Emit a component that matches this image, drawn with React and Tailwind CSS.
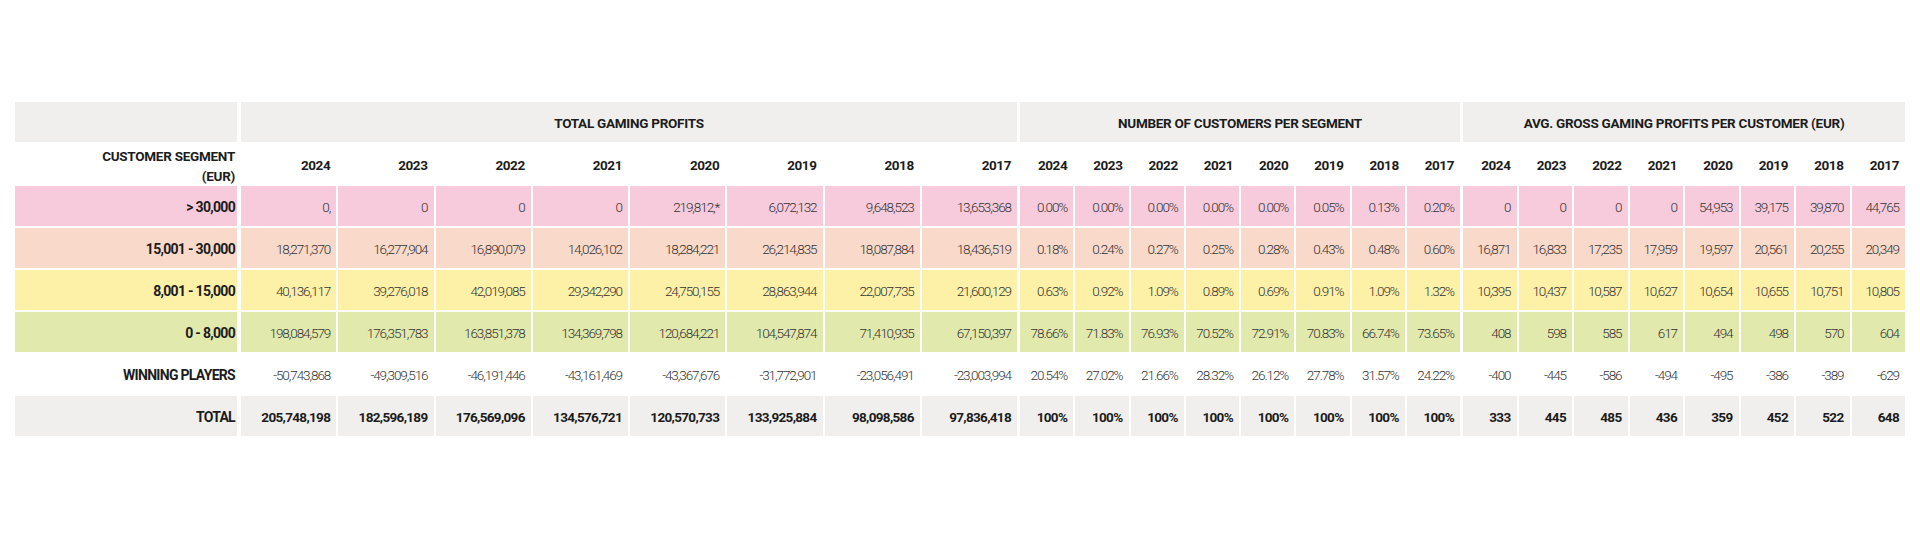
import React from "react";

const years = ["2024", "2023", "2022", "2021", "2020", "2019", "2018", "2017"];

const rows = [
  {
    label: "> 30,000",
    bg: "bg-[#f7cbdb]",
    profits: ["0,", "0", "0", "0", "219,812,*", "6,072,132", "9,648,523", "13,653,368"],
    customers: ["0.00%", "0.00%", "0.00%", "0.00%", "0.00%", "0.05%", "0.13%", "0.20%"],
    avg: ["0", "0", "0", "0", "54,953", "39,175", "39,870", "44,765"],
  },
  {
    label: "15,001 - 30,000",
    bg: "bg-[#f9d9c9]",
    profits: ["18,271,370", "16,277,904", "16,890,079", "14,026,102", "18,284,221", "26,214,835", "18,087,884", "18,436,519"],
    customers: ["0.18%", "0.24%", "0.27%", "0.25%", "0.28%", "0.43%", "0.48%", "0.60%"],
    avg: ["16,871", "16,833", "17,235", "17,959", "19,597", "20,561", "20,255", "20,349"],
  },
  {
    label: "8,001 - 15,000",
    bg: "bg-[#fdf0a7]",
    profits: ["40,136,117", "39,276,018", "42,019,085", "29,342,290", "24,750,155", "28,863,944", "22,007,735", "21,600,129"],
    customers: ["0.63%", "0.92%", "1.09%", "0.89%", "0.69%", "0.91%", "1.09%", "1.32%"],
    avg: ["10,395", "10,437", "10,587", "10,627", "10,654", "10,655", "10,751", "10,805"],
  },
  {
    label: "0 - 8,000",
    bg: "bg-[#e2e9ad]",
    profits: ["198,084,579", "176,351,783", "163,851,378", "134,369,798", "120,684,221", "104,547,874", "71,410,935", "67,150,397"],
    customers: ["78.66%", "71.83%", "76.93%", "70.52%", "72.91%", "70.83%", "66.74%", "73.65%"],
    avg: ["408", "598", "585", "617", "494", "498", "570", "604"],
  },
  {
    label: "WINNING PLAYERS",
    bg: "bg-white",
    profits: ["-50,743,868", "-49,309,516", "-46,191,446", "-43,161,469", "-43,367,676", "-31,772,901", "-23,056,491", "-23,003,994"],
    customers: ["20.54%", "27.02%", "21.66%", "28.32%", "26.12%", "27.78%", "31.57%", "24.22%"],
    avg: ["-400", "-445", "-586", "-494", "-495", "-386", "-389", "-629"],
  },
  {
    label: "TOTAL",
    bg: "bg-[#f0efed]",
    bold: true,
    profits: ["205,748,198", "182,596,189", "176,569,096", "134,576,721", "120,570,733", "133,925,884", "98,098,586", "97,836,418"],
    customers: ["100%", "100%", "100%", "100%", "100%", "100%", "100%", "100%"],
    avg: ["333", "445", "485", "436", "359", "452", "522", "648"],
  },
];

// extra space before the first column of each group
const groupStart = ["ml-[2px]", "ml-[1px]", "ml-[1px]"];

const Cell = ({ value, bg, bold, first }) => (
  <div
    className={`${bg} ${first || ""} h-[40px] flex items-center justify-end pt-[3px] pr-[6px] text-[13.5px] whitespace-nowrap ${
      bold
        ? "font-bold text-[#1c1c1c] tracking-[-0.05em]"
        : "font-light text-[#333333] tracking-[-0.08em]"
    }`}
  >
    {value}
  </div>
);

const App = () => {
  return (
    <div className="w-[1920px] h-[540px] bg-white pt-[102px] px-[15px] font-['Roboto','Liberation_Sans',sans-serif]">
      <div className="grid grid-cols-[222px_97.25px_repeat(7,95.25px)_54.25px_repeat(7,53.25px)_54.5px_repeat(7,53.5px)] gap-[2px]">
        {/* group titles */}
        <div className="h-[40px] bg-[#f0efed]" />
        <div className="col-span-8 ml-[2px] h-[40px] bg-[#f0efed] flex items-center justify-center pt-[3px] text-[13.5px] tracking-[-0.02em] font-bold text-[#1c1c1c]">
          TOTAL GAMING PROFITS
        </div>
        <div className="col-span-8 ml-[1px] h-[40px] bg-[#f0efed] flex items-center justify-center pt-[3px] text-[13.5px] tracking-[-0.02em] font-bold text-[#1c1c1c]">
          NUMBER OF CUSTOMERS PER SEGMENT
        </div>
        <div className="col-span-8 ml-[1px] h-[40px] bg-[#f0efed] flex items-center justify-center pt-[3px] text-[13.5px] tracking-[-0.02em] font-bold text-[#1c1c1c]">
          AVG. GROSS GAMING PROFITS PER CUSTOMER (EUR)
        </div>

        {/* years */}
        <div className="h-[40px] flex items-center justify-end pt-[3px] pr-[2px] text-right text-[13.5px] tracking-[-0.02em] leading-[20px] font-bold text-[#1c1c1c]">
          CUSTOMER SEGMENT
          <br />
          (EUR)
        </div>
        {[0, 1, 2].map((g) =>
          years.map((y, i) => (
            <div
              key={`${g}-${y}`}
              className={`${i === 0 ? groupStart[g] : ""} h-[40px] flex items-center justify-end pt-[3px] pr-[6px] text-[13.5px] font-bold text-[#1c1c1c] tracking-[-0.03em]`}
            >
              {y}
            </div>
          ))
        )}

        {/* data rows */}
        {rows.map((r) => (
          <React.Fragment key={r.label}>
            <div
              className={`${r.bg} h-[40px] flex items-center justify-end pt-[3px] pr-[2px] text-[14px] font-bold text-[#1c1c1c] tracking-[-0.05em] whitespace-nowrap`}
            >
              {r.label}
            </div>
            {[r.profits, r.customers, r.avg].map((vals, g) =>
              vals.map((v, i) => (
                <Cell
                  key={`${g}-${i}`}
                  value={v}
                  bg={r.bg}
                  bold={r.bold}
                  first={i === 0 ? groupStart[g] : ""}
                />
              ))
            )}
          </React.Fragment>
        ))}
      </div>
    </div>
  );
};

export default App;
